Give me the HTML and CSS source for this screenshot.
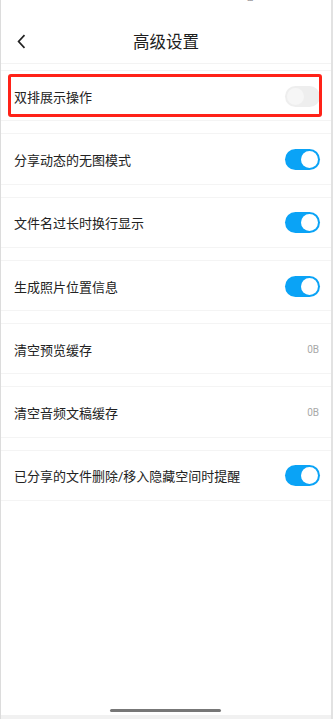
FILE: index.html
```html
<!DOCTYPE html>
<html lang="zh-CN">
<head>
<meta charset="utf-8">
<title>高级设置</title>
<link rel="stylesheet" href="styles.css">
</head>
<body>
<div class="status">
  <span class="time">11:00</span>
  <span class="icons">● ◎ ℕ ▬ ıll ▭</span>
</div>
<header class="nav">
  <svg class="back" width="9" height="15" viewBox="0 0 9 15"><path d="M7.5 1.2 L1.6 7.5 L7.5 13.8" fill="none" stroke="#222" stroke-width="1.7"/></svg>
  <h1 class="title">高级设置</h1>
  <span></span>
</header>
<main class="list">
  <div class="row highlight"><span class="label">双排展示操作</span><span class="toggle off"><span class="knob"></span></span></div>
  <div class="row"><span class="label">分享动态的无图模式</span><span class="toggle on"><span class="knob"></span></span></div>
  <div class="row"><span class="label">文件名过长时换行显示</span><span class="toggle on"><span class="knob"></span></span></div>
  <div class="row"><span class="label">生成照片位置信息</span><span class="toggle on"><span class="knob"></span></span></div>
  <div class="row"><span class="label">清空预览缓存</span><span class="value">0B</span></div>
  <div class="row"><span class="label">清空音频文稿缓存</span><span class="value">0B</span></div>
  <div class="row"><span class="label">已分享的文件删除/移入隐藏空间时提醒</span><span class="toggle on"><span class="knob"></span></span></div>
</main>
<div class="home"></div>
<div class="strip"></div>
</body>
</html>
```
FILE: styles.css
```css
html, body { margin: 0; padding: 0; }
body {
  width: 333px;
  height: 719px;
  box-sizing: border-box;
  border-left: 1px solid #dcdcdc;
  border-right: 2px solid #e2e2e2;
  background: #fff;
  font-family: Roboto, "Noto Sans CJK SC", sans-serif;
  color: #222;
  display: flex;
  flex-direction: column;
  overflow: hidden;
}
.status {
  height: 20px;
  display: flex;
  justify-content: space-between;
  align-items: flex-start;
  padding: 0 22px 0 47px;
  overflow: hidden;
}
.time, .icons {
  font-size: 12px;
  line-height: 12px;
  margin-top: -10px;
  color: #333;
}
.nav {
  height: 45px;
  box-sizing: border-box;
  border-bottom: 1px solid #f3f3f3;
  display: grid;
  grid-template-columns: 40px 1fr 40px;
  align-items: center;
  margin-top: -1px;
  padding-bottom: 1px;
}
.back { margin-left: 16px; margin-top: 1px; }
.title {
  margin: 0;
  text-align: center;
  font-size: 16.5px;
  font-weight: 400;
  color: #1e1e1e;
  margin-top: 1px;
}
.list {
  flex: 1;
  display: flex;
  flex-direction: column;
  gap: 12px;
  padding-top: 6px;
}
.row {
  position: relative;
  height: 51.3px;
  flex-shrink: 0;
  box-sizing: border-box;
  border-top: 1px solid #f4f4f4;
  border-bottom: 1px solid #f4f4f4;
  display: flex;
  align-items: center;
  justify-content: space-between;
  padding: 1px 11px 0 13px;
}
.label {
  font-size: 13px;
  color: #222;
}
.value {
  font-size: 10px;
  color: #a8a8a8;
  margin-right: 1px;
}
.toggle {
  width: 35px;
  height: 21px;
  border-radius: 11px;
  box-sizing: border-box;
  padding: 2px;
  display: flex;
}
.toggle.on { background: #0aa3f6; justify-content: flex-end; }
.toggle.off { background: #eeeeee; justify-content: flex-start; }
.knob {
  width: 17px;
  height: 17px;
  border-radius: 50%;
  background: #fff;
}
.toggle.off .knob { background: #f6f6f6; }
.highlight::after {
  content: "";
  position: absolute;
  top: 3px;
  bottom: 3px;
  left: 7px;
  right: 9px;
  border: 3px solid #ff2218;
  border-radius: 3px;
}
.home {
  width: 111px;
  height: 3px;
  border-radius: 2px;
  background: #777;
  margin: 0 auto 3px;
  position: relative;
  left: -1px;
}
.strip {
  height: 4px;
  background: #f1f1f1;
}
```
